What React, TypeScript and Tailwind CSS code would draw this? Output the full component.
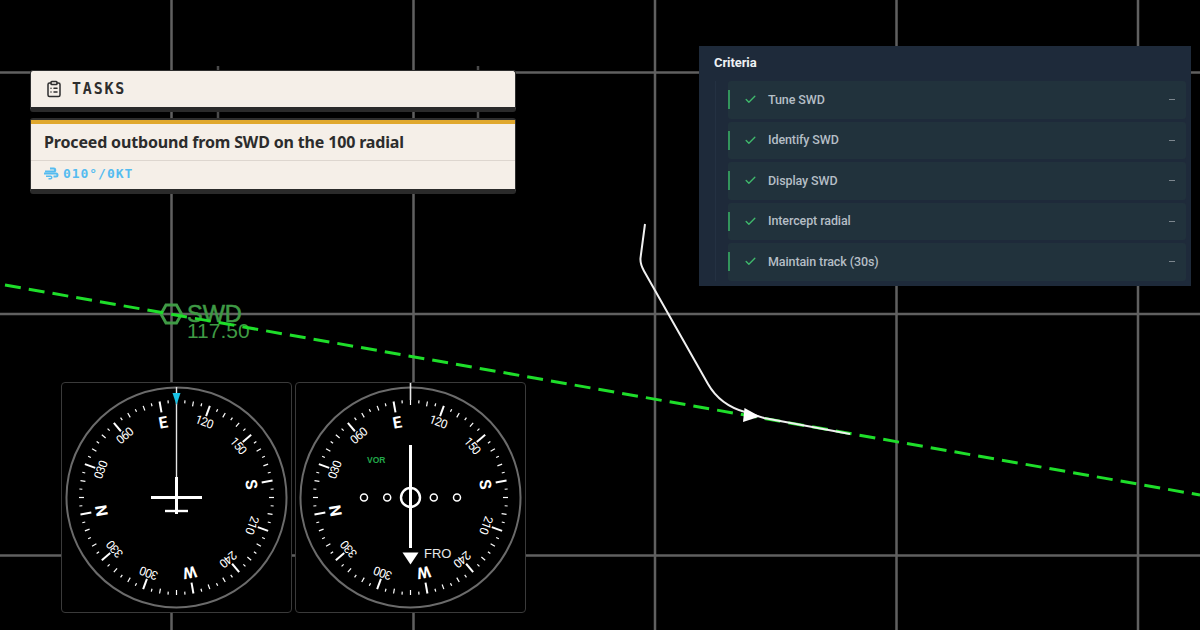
import { ClipboardList, Check } from 'lucide-react';

const criteria = ['Tune SWD', 'Identify SWD', 'Display SWD', 'Intercept radial', 'Maintain track (30s)'];
const cardinal: Record<number, string> = { 0: 'N', 90: 'E', 180: 'S', 270: 'W' };
const headings = Array.from({ length: 72 }, (_, i) => i * 5);

// Compass rose, heading 100 sits at the top
const CompassRose = () => (
  <g transform="rotate(-100 115.5 115.5)">
    {headings.map((h) => {
      const long = h % 30 === 0;
      return (
        <line
          key={h}
          x1="115.5"
          x2="115.5"
          y1="18"
          y2={long ? 29 : h % 10 === 0 ? 23 : 21}
          stroke="#fff"
          strokeWidth={long ? 2 : 1.2}
          transform={`rotate(${h} 115.5 115.5)`}
        />
      );
    })}
    {headings
      .filter((h) => h % 30 === 0)
      .map((h) => {
        const label = cardinal[h];
        return (
          <text
            key={h}
            x="115.5"
            y={label ? 45 : 39}
            textAnchor="middle"
            fill="#fff"
            fontSize={label ? 16 : 12}
            fontWeight={label ? 700 : 400}
            letterSpacing={label ? 0 : -0.8}
            fontFamily="Roboto, sans-serif"
            transform={`rotate(${h} 115.5 115.5)`}
          >
            {label ?? String(h).padStart(3, '0')}
          </text>
        );
      })}
    <circle cx="115.5" cy="115.5" r="110" fill="none" stroke="#6b6b6b" strokeWidth="2" />
  </g>
);

const HeadingIndicator = () => (
  <div className="w-[231px] h-[231px] border border-[#3a3a3a] rounded-sm bg-black">
    <svg width="229" height="229" viewBox="1 1 229 229">
      <CompassRose />
      <line x1="115.5" x2="115.5" y1="5" y2="96" stroke="#e5e5e5" strokeWidth="1.4" />
      <polygon points="111.5,11 119.5,11 115.5,23" fill="#19c3e6" />
      <line x1="115.5" x2="115.5" y1="95" y2="132" stroke="#fff" strokeWidth="3" />
      <line x1="90" x2="141" y1="115.5" y2="115.5" stroke="#fff" strokeWidth="3" />
      <line x1="104" x2="127" y1="129" y2="129" stroke="#fff" strokeWidth="2.4" />
    </svg>
  </div>
);

const VorIndicator = () => (
  <div className="w-[231px] h-[231px] border border-[#3a3a3a] rounded-sm bg-black">
    <svg width="229" height="229" viewBox="1 1 229 229">
      <CompassRose />
      <line x1="115.5" x2="115.5" y1="1" y2="18" stroke="#e5e5e5" strokeWidth="1.6" />
      <line x1="115.5" x2="115.5" y1="63" y2="166" stroke="#fff" strokeWidth="3" />
      <circle cx="115.5" cy="115.5" r="9.5" fill="none" stroke="#fff" strokeWidth="2.4" />
      {[-46.5, -23.3, 23.3, 46.5].map((dx) => (
        <circle key={dx} cx={115.5 + dx} cy="115.5" r="3.5" fill="none" stroke="#fff" strokeWidth="1.5" />
      ))}
      <polygon points="107.5,170.5 123.5,170.5 115.5,182.5" fill="#fff" />
      <text x="129" y="176" fill="#e8e8e8" fontSize="13" fontFamily="Liberation Sans, sans-serif">
        FRO
      </text>
      <text x="72" y="81" fill="#22a84a" fontSize="8.5" fontWeight="700" fontFamily="Liberation Sans, sans-serif">
        VOR
      </text>
    </svg>
  </div>
);

// Gambar peta: grid, radial, jalur pesawat
const MapCanvas = () => (
  <svg className="absolute inset-0" width="1200" height="630" viewBox="0 0 1200 630">
    {[171.5, 413.5, 655, 896.5, 1138].map((x) => (
      <line key={x} x1={x} x2={x} y1="0" y2="630" stroke="#606060" strokeWidth="2.5" />
    ))}
    {[72.5, 314, 555.5].map((y) => (
      <line key={y} x1="0" x2="1200" y1={y} y2={y} stroke="#606060" strokeWidth="2.5" />
    ))}
    {[218, 478].map((x) => (
      <line key={x} x1={x} x2={x} y1="66" y2="118" stroke="#4a4a4a" strokeWidth="2.5" />
    ))}
    <polygon
      points="161,314 166,305 176.500,305 181.500,314 176.500,323 166,323"
      fill="none"
      stroke="#3f9a45"
      strokeWidth="3"
    />
    <text
      x="187"
      y="322"
      fill="#3f9a45"
      stroke="#3f9a45"
      strokeWidth="0.6"
      fontSize="23.5"
      fontFamily="Liberation Sans, sans-serif"
    >
      SWD
    </text>
    <text x="187" y="338" fill="#3f9a45" fontSize="21" fontFamily="Liberation Sans, sans-serif">
      117.50
    </text>
    <line x1="5" y1="285" x2="1200" y2="495" stroke="#1ede2a" strokeWidth="3" strokeDasharray="16 8.1" />
    <path
      d="M645 224 L640.500 258 Q640 264 644 271 L708 384 Q720 405 745 412 L764 418 L850 434"
      fill="none"
      stroke="#f0f0f0"
      strokeWidth="2"
    />
    <polygon points="744.500,408 743,422 760,416.500" fill="#fff" />
  </svg>
);

export default function App() {
  return (
    <div className="relative w-[1200px] h-[630px] bg-black overflow-hidden font-['Roboto',sans-serif]">
      <MapCanvas />

      {/* Panel tasks */}
      <div className="absolute left-[30px] top-[70px] w-[486px] flex flex-col gap-[6px]">
        <div className="flex items-center h-[42px] px-[14px] gap-[8px] bg-[#f5efe8] rounded-[3px] border border-[#2e2e2e] border-b-[5px] border-b-[#2a2a2a] text-[#2e2e2e]">
          <ClipboardList size={18} strokeWidth={2} />
          <span className="font-['DejaVu_Sans_Mono',monospace] text-[15px] font-bold tracking-[1.8px] leading-none pl-px">
            TASKS
          </span>
        </div>
        <div className="flex flex-col bg-[#f5efe8] rounded-[3px] border border-[#2e2e2e] border-t-2 border-b-[5px] border-b-[#2a2a2a]">
          <div className="h-[4px] bg-[#e0a82e]" />
          <div className="flex items-center h-[37px] px-[13px] border-b border-[#ddd6cf]">
            <span className="font-['Noto_Sans',sans-serif] font-bold text-[16px] leading-none text-[#2c2c2c] tracking-[-0.16px]">
              Proceed outbound from SWD on the 100 radial
            </span>
          </div>
          <div className="flex items-center h-[28px] px-[13px] pb-[3px] gap-[4px] text-[#55bcf0]">
            <svg width="15" height="13" viewBox="0 0 15 13" fill="currentColor">
              <path d="M6 0.500h3.500a2.500 2.500 0 0 1 .5 5H1V3.500h8.500a.5.5 0 0 0 0-1H6z" />
              <path d="M0 5.500h12a2.500 2.500 0 0 1 0 5H9.500V8.500H12a.5.5 0 0 0 0-1H0z" />
              <path d="M2 8.500h4.500a2 2 0 0 1 0 4H4.500V11h2a.5.5 0 0 0 0-1H2z" />
            </svg>
            <span className="font-['DejaVu_Sans_Mono',monospace] font-bold text-[13px] tracking-[0.95px] leading-none">
              010°/0KT
            </span>
          </div>
        </div>
      </div>

      {/* Panel criteria */}
      <div className="absolute left-[699px] top-[46px] w-[492px] h-[240px] bg-[#1e2a3a] flex flex-col">
        <div className="h-[35px] flex items-center px-[15px] pb-px">
          <span className="text-[13px] font-bold text-[#eef1f4] tracking-[-0.1px]">Criteria</span>
        </div>
        <div className="ml-[16px] pl-[12px] pr-[5px] border-l border-[#243142] flex flex-col gap-[3px]">
          {criteria.map((item) => (
            <div key={item} className="flex items-center h-[37.500px] bg-[#21323c] rounded-[3px] pr-[11px]">
              <div className="w-[2px] h-[19px] bg-[#33945c]" />
              <Check size={13} strokeWidth={2.5} className="ml-[14px] text-[#3fb96c]" />
              <span className="ml-[11px] pt-px text-[12.500px] font-medium text-[#b5bec6] tracking-[-0.1px]">{item}</span>
              <div className="ml-auto w-[6px] h-px bg-[#7c868e]" />
            </div>
          ))}
        </div>
      </div>

      {/* Instrumen */}
      <div className="absolute left-[61px] top-[382px] flex gap-[3px]">
        <HeadingIndicator />
        <VorIndicator />
      </div>
    </div>
  );
}
